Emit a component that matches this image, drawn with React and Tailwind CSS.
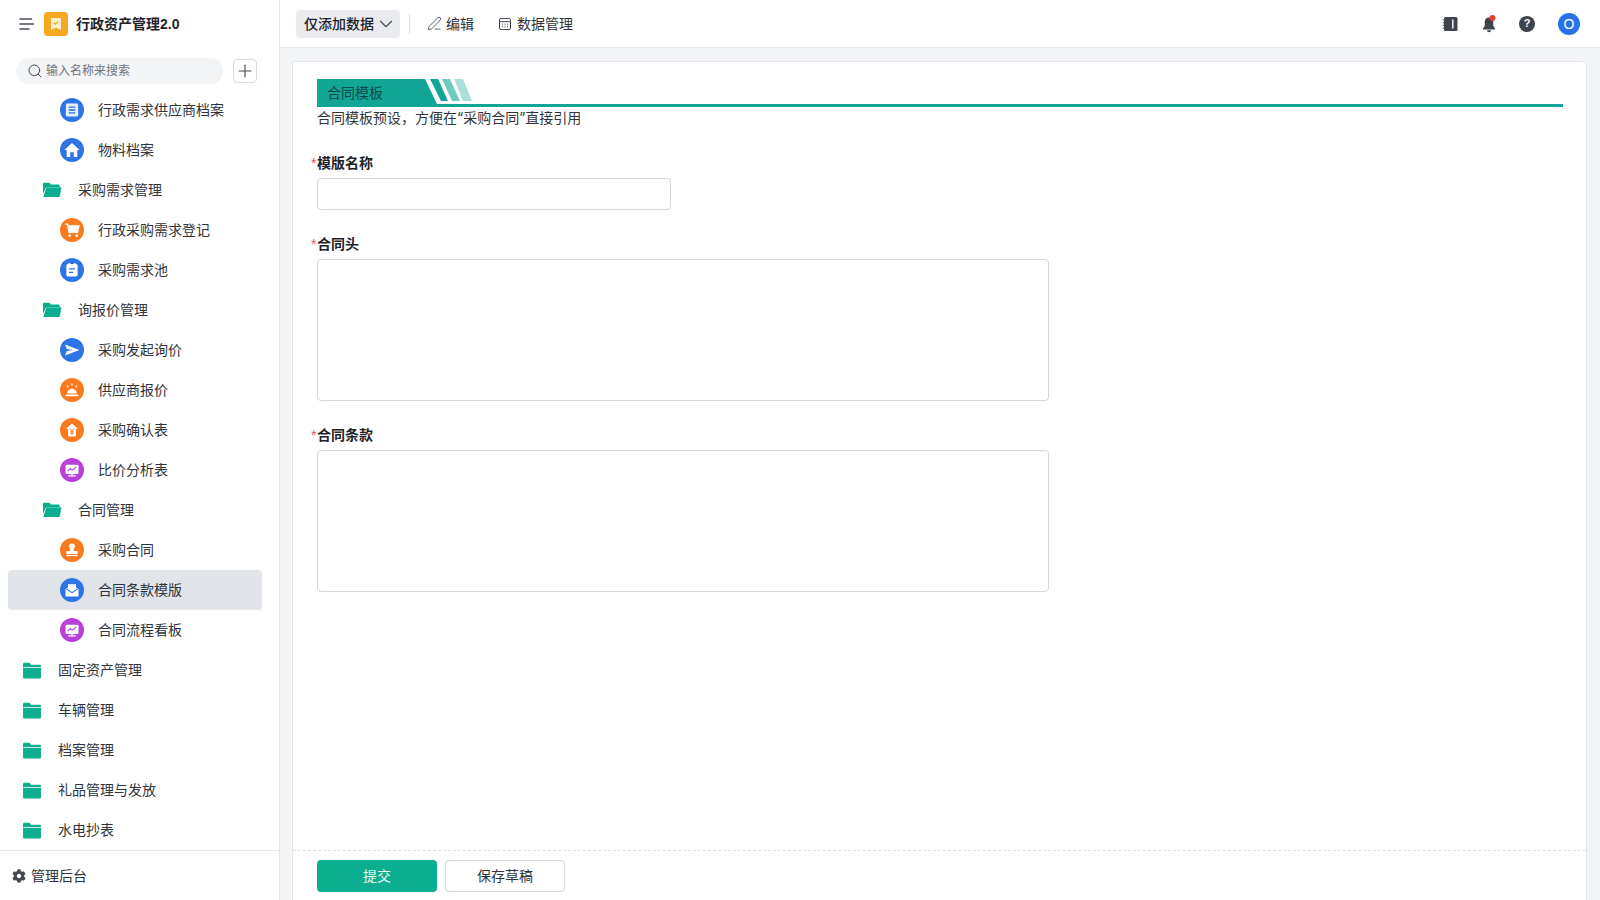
import React from "react";
import { Search, Plus, ChevronDown, PenLine } from "lucide-react";
import { FaCog } from "react-icons/fa";

const Glyphs = {
  doc: <><rect x="6.800" y="6.500" width="10.400" height="11" rx="1.200" fill="#e3edfb"/><path d="M9.200 9.500h5.600M9.200 12h5.600M9.200 14.500h5.600" stroke="#2f74e4" strokeWidth="1.100"/></>,
  home: <path d="M12 6 5.500 12h2v6h3v-4h3v4h3v-6h2z" fill="#fff"/>,
  cart: <><path d="M6.500 7h1.800l1.300 7h7l1.300-5.500H8.600" fill="#fff" stroke="#fff" strokeWidth="1.200"/><circle cx="10" cy="16.800" r="1.100" fill="#fff"/><circle cx="16" cy="16.800" r="1.100" fill="#fff"/></>,
  clip: <><rect x="7.200" y="7" width="9.600" height="10.500" rx="1.500" fill="#fff"/><rect x="9" y="6" width="1.400" height="2.400" fill="#fff"/><rect x="13.600" y="6" width="1.400" height="2.400" fill="#fff"/><path d="M9.500 11h5M9.500 14h3.500" stroke="#2f74e4" strokeWidth="1.100"/></>,
  send: <path d="M5 6.500 19.500 12 5 17.500l1.800-4.400 6.200-1.100-6.200-1.100z" fill="#fff"/>,
  alarm: <><path d="M8 15a4 4 0 0 1 8 0z" fill="#fff"/><rect x="6.800" y="15.800" width="10.400" height="1.500" fill="#fff"/><path d="M12 6.500v2M7.800 8l1.100 1.600M16.200 8l-1.100 1.600" stroke="#fff" strokeWidth="1"/></>,
  yen: <><path d="M12 6.500 6.800 11h1.900v6.500h6.600V11h1.900z" fill="#fff"/><path d="m10.400 10.800 1.600 1.900 1.600-1.900M12 12.700v3.300M10.500 13.400h3M10.500 14.800h3" stroke="#f97a1f" strokeWidth=".8" fill="none"/></>,
  screen: <><rect x="6.500" y="7.500" width="11" height="7.800" rx="1" fill="#fff"/><path d="m8.300 13 2.200-2 1.700 1.100 3.400-2.600" stroke="#b93fd9" strokeWidth="1" fill="none"/><path d="M12 15.300v1.500M8.800 17h6.400" stroke="#fff" strokeWidth="1.100"/></>,
  stamp: <><circle cx="12" cy="8.800" r="2.400" fill="#fff"/><path d="M10.700 10.500h2.600l.4 2.400h-3.400z" fill="#fff"/><rect x="7.200" y="12.800" width="9.600" height="2.500" rx=".6" fill="#fff"/><rect x="7.200" y="16" width="9.600" height="1.200" fill="#fff"/></>,
  mail: <><path d="M6.500 11.200 8.600 9.700V7.200h6.800v2.500l2.100 1.500v6.300h-11z" fill="#fff"/><path d="m7 11 5 3.200 5-3.200" stroke="#2f74e4" strokeWidth=".9" fill="none"/></>,
};

const Round = ({ kind, color }) => (
  <svg width="24" height="24" viewBox="0 0 24 24" className="shrink-0">
    <circle cx="12" cy="12" r="12" fill={color} />
    <g transform={kind === "send" ? undefined : "translate(12 12) scale(1.180) translate(-12 -12)"}>{Glyphs[kind]}</g>
  </svg>
);

const OpenFolder = () => (
  <svg width="20" height="16" viewBox="0 0 20 16" className="shrink-0">
    <path d="M1 2.200C1 1.300 1.600.8 2.400.8h4.800l1.600 1.800h7.600c.8 0 1.300.5 1.300 1.300V5H4.300L1 12z" fill="#0cae8e"/>
    <path d="M4.400 5.300H19.400l-1.500 8.600c-.1.6-.5 1-1.200 1H1.300z" fill="#0cae8e"/>
  </svg>
);

const ClosedFolder = () => (
  <svg width="20" height="17" viewBox="0 0 20 17" className="shrink-0">
    <path d="M1 2.200C1 1.300 1.600.8 2.400.8h5l1.700 1.900h8.400c.9 0 1.500.6 1.500 1.500v1H1z" fill="#0cae8e"/>
    <path d="M1 6h18v9c0 .9-.6 1.500-1.500 1.500h-15C1.600 16.500 1 15.900 1 15z" fill="#0cae8e"/>
  </svg>
);

const blue = "#2f74e4";
const orange = "#f97a1f";
const purple = "#b93fd9";

const nav = [
  { t: "行政需求供应商档案", k: "doc", c: blue },
  { t: "物料档案", k: "home", c: blue },
  { t: "采购需求管理", f: 1 },
  { t: "行政采购需求登记", k: "cart", c: orange },
  { t: "采购需求池", k: "clip", c: blue },
  { t: "询报价管理", f: 1 },
  { t: "采购发起询价", k: "send", c: blue },
  { t: "供应商报价", k: "alarm", c: orange },
  { t: "采购确认表", k: "yen", c: orange },
  { t: "比价分析表", k: "screen", c: purple },
  { t: "合同管理", f: 1 },
  { t: "采购合同", k: "stamp", c: orange },
  { t: "合同条款模版", k: "mail", c: blue, active: true },
  { t: "合同流程看板", k: "screen", c: purple },
  { t: "固定资产管理", f: 0 },
  { t: "车辆管理", f: 0 },
  { t: "档案管理", f: 0 },
  { t: "礼品管理与发放", f: 0 },
  { t: "水电抄表", f: 0 },
];

function NavRow({ item }) {
  if (item.f === 0) {
    return (
      <div className="flex h-10 items-center pl-[22px] text-sm text-[#30343b]">
        <ClosedFolder />
        <span className="ml-4">{item.t}</span>
      </div>
    );
  }
  if (item.f === 1) {
    return (
      <div className="flex h-10 items-center pl-[42px] text-sm text-[#30343b]">
        <OpenFolder />
        <span className="ml-4">{item.t}</span>
      </div>
    );
  }
  return (
    <div className={`ml-2 mr-[17px] flex h-10 items-center rounded pl-[52px] text-sm text-[#30343b] ${item.active ? "bg-[#e1e4e8]" : ""}`}>
      <Round kind={item.k} color={item.c} />
      <span className="ml-[14px]">{item.t}</span>
    </div>
  );
}

function Sidebar() {
  return (
    <aside className="flex h-full w-[280px] shrink-0 flex-col border-r border-[#e4e7ea] bg-white">
      <div className="flex h-12 items-center pl-[18px]">
        <svg width="16" height="16" viewBox="0 0 16 16" fill="none" stroke="#4a4f57" strokeWidth="1.600" strokeLinecap="round">
          <path d="M2 3h11.500M2 8h13.500M2 13h9" />
        </svg>
        <div className="ml-[10px] flex h-6 w-6 items-center justify-center rounded bg-[#f7a823]">
          <svg width="12" height="14" viewBox="0 0 12 14">
            <path d="M1 1h10v12L6 10.500 1 13z" fill="#fdf0cf" />
            <path d="m3.800 5.500 1.600 1.600 2.800-2.800" stroke="#f2a52a" strokeWidth="1.100" fill="none" />
          </svg>
        </div>
        <span className="ml-2 text-sm font-semibold text-[#1f2329]">行政资产管理2.0</span>
      </div>
      <div className="flex h-[42px] items-start pl-4 pt-[10px]">
        <div className="flex h-[26px] w-[207px] items-center rounded-full bg-[#f2f4f6] pl-[11px]">
          <Search size={16} strokeWidth={1.500} className="text-[#444950]" />
          <span className="ml-[3px] text-xs text-[#6f747c]">输入名称来搜索</span>
        </div>
        <div className="ml-[10px] mt-px flex h-6 w-6 items-center justify-center rounded border border-[#d9dce0] bg-white">
          <Plus size={20} strokeWidth={1.400} className="text-[#444950]" />
        </div>
      </div>
      <div className="min-h-0 flex-1 overflow-hidden">
        {nav.map((item) => (
          <NavRow key={item.t} item={item} />
        ))}
      </div>
      <div className="flex h-[50px] items-center border-t border-[#e4e7ea] pl-3 text-sm text-[#30343b]">
        <FaCog size={14} className="text-[#444950]" />
        <span className="ml-[5px]">管理后台</span>
      </div>
    </aside>
  );
}

function TopBar() {
  return (
    <header className="flex h-12 shrink-0 items-center border-b border-[#e8eaed] bg-white pl-4 pr-5 text-sm text-[#30343b]">
      <div className="flex h-7 w-[104px] items-center rounded bg-[#e9ebef] pl-2 font-medium text-[#1f2329]">
        仅添加数据
        <ChevronDown size={22} strokeWidth={1.200} className="ml-px text-[#444950]" />
      </div>
      <div className="ml-[9px] h-5 w-px bg-[#d9dce0]" />
      <PenLine size={15} strokeWidth={1.400} className="ml-[17px] text-[#444950]" />
      <span className="ml-1">编辑</span>
      <svg width="14" height="14" viewBox="0 0 14 14" className="ml-6" fill="none" stroke="#444950" strokeWidth="1">
        <rect x="1.500" y="1.500" width="11" height="11" rx="1.500" />
        <path d="M1.500 4.700h11M4 7.200h1M6.500 7.200h1M9 7.200h1M4 9.800h1M6.500 9.800h1M9 9.800h1" />
      </svg>
      <span className="ml-[5px]">数据管理</span>
      <div className="ml-auto flex items-center">
        <svg width="16" height="16" viewBox="0 0 16 16">
          <rect x="2" y="1" width="13.500" height="14" rx="1.500" fill="#3f444d" />
          <path d="M.8 4h2.400M.8 6.700h2.400M.8 9.400h2.400M.8 12h2.400" stroke="#3f444d" strokeWidth="1" />
          <rect x="10" y="3.500" width="1.600" height="9" fill="#e6e8eb" />
        </svg>
        <div className="ml-[23px]">
          <svg width="16" height="18" viewBox="0 0 16 18">
            <path d="M8 2.500c-2.800 0-4.300 2-4.300 4.600v4L2 13.600v.9h12v-.9l-1.700-2.500v-4C12.300 4.500 10.800 2.500 8 2.500z" fill="#3f444d" />
            <path d="M6 15.300a2 2 0 0 0 4 0z" fill="#3f444d" />
            <circle cx="11.500" cy="3" r="3" fill="#e23c3c" />
          </svg>
        </div>
        <div className="ml-[22px] flex h-4 w-4 items-center justify-center rounded-full bg-[#3f444d] text-[11px] leading-none font-bold text-white">?</div>
        <div className="ml-[23px] flex h-[22px] w-[22px] items-center justify-center rounded-full bg-[#2873e8] text-sm text-white">O</div>
      </div>
    </header>
  );
}

const Label = ({ children }) => (
  <div className="-ml-[6px] flex h-5 items-center text-sm font-semibold text-[#1f2329]">
    <span className="w-[6px] text-sm font-normal text-[#e0565b]">*</span>
    {children}
  </div>
);

function Banner() {
  return (
    <div className="relative h-7 border-b-[3px] border-[#11a696]">
      <svg width="156" height="25" viewBox="0 0 156 25" className="absolute left-0 top-0">
        <path d="M0 0h108l12 25H0z" fill="#11a696" />
        <path d="M113 0h8l10 22h-7z" fill="#11a696" />
        <path d="M125 0h8l10 22h-8z" fill="#11a696" fillOpacity=".6" />
        <path d="M137 0h9l9 22h-9z" fill="#11a696" fillOpacity=".35" />
      </svg>
      <span className="relative block pl-[10px] text-sm leading-7 text-[#0d4a4a]">合同模板</span>
    </div>
  );
}

function Form() {
  return (
    <main className="ml-3 mr-[13px] mt-[13px] flex min-h-0 flex-1 flex-col rounded-t border border-b-0 border-[#e1e4e8] bg-white">
      <div className="flex-1 overflow-hidden pl-6 pr-[23px] pt-[17px]">
        <Banner />
        <p className="mt-px h-5 font-['Inter','Noto_Sans_CJK_SC',sans-serif] text-sm leading-5 text-[#30343b]">合同模板预设，方便在“采购合同”直接引用</p>
        <div className="mt-[25px]"><Label>模版名称</Label></div>
        <div className="mt-[5px] h-8 w-[354px] rounded border border-[#d3d6da]" />
        <div className="mt-[24px]"><Label>合同头</Label></div>
        <div className="mt-[5px] h-[142px] w-[732px] rounded border border-[#d3d6da]" />
        <div className="mt-[24px]"><Label>合同条款</Label></div>
        <div className="mt-[5px] h-[142px] w-[732px] rounded border border-[#d3d6da]" />
      </div>
      <div className="flex h-[50px] shrink-0 items-start gap-2 border-t border-dashed border-[#dfe2e5] pl-6 pt-[9px] text-sm">
        <div className="flex h-8 w-[120px] items-center justify-center rounded bg-[#0bae8e] text-[#e6f7f3]">提交</div>
        <div className="flex h-8 w-[120px] items-center justify-center rounded border border-[#d3d6da] text-[#30343b]">保存草稿</div>
      </div>
    </main>
  );
}

export default function App() {
  return (
    <div className="flex h-[900px] w-[1600px] overflow-hidden bg-[#f2f4f6] font-['Liberation_Sans','Noto_Sans_CJK_SC',sans-serif]">
      <Sidebar />
      <div className="flex min-w-0 flex-1 flex-col">
        <TopBar />
        <Form />
      </div>
    </div>
  );
}
